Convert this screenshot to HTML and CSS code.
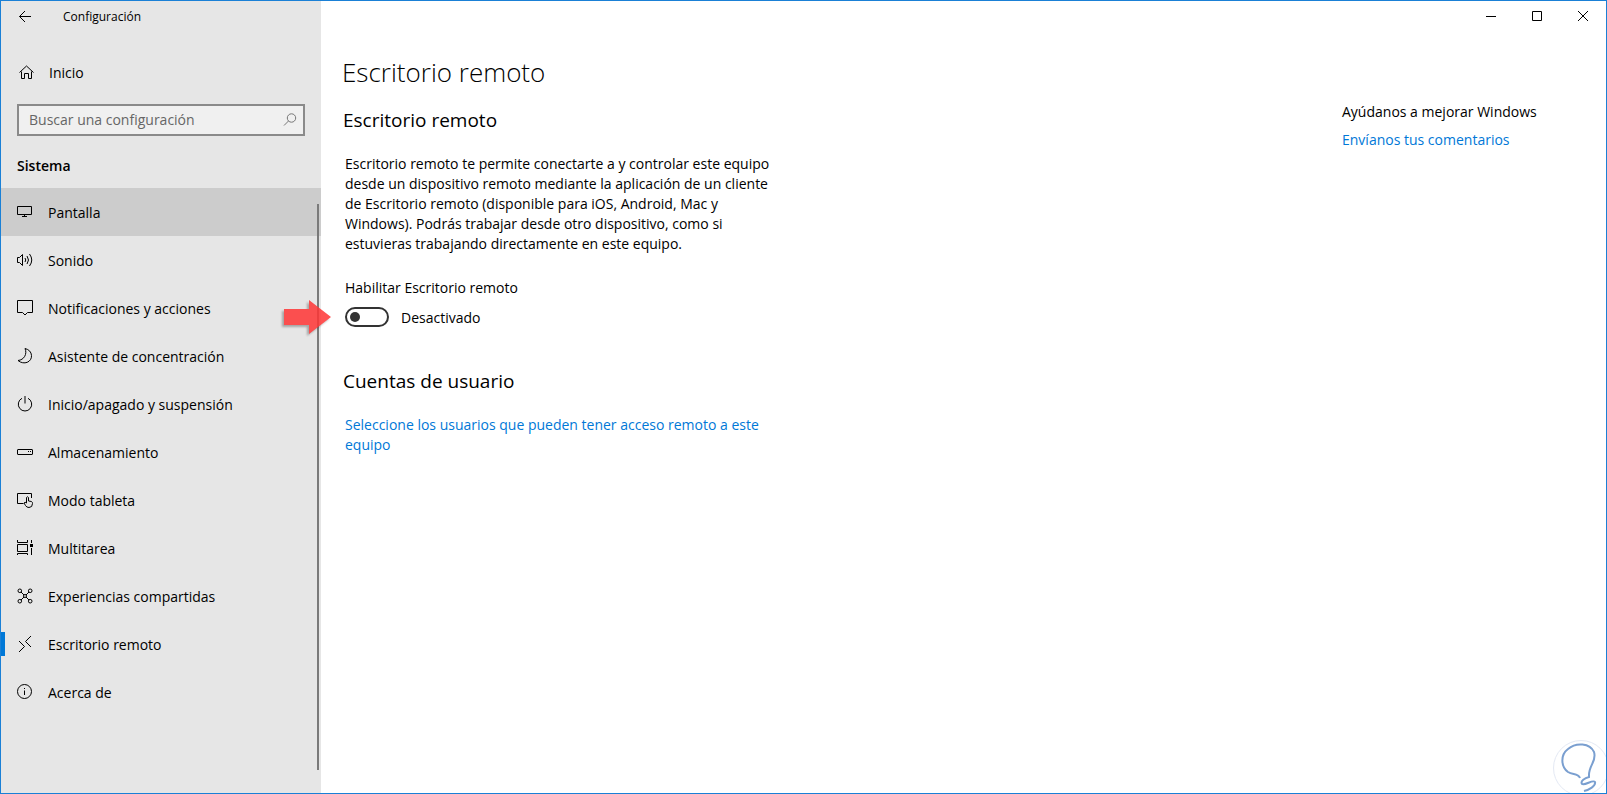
FILE: index.html
```
<!DOCTYPE html>
<html lang="es">
  <head>
    <meta charset="UTF-8" />
    <meta name="viewport" content="width=device-width, initial-scale=1" />
    <title>Configuración</title>
    <link rel="stylesheet" href="styles.css" />
  </head>

  <body>
    <div class="window">
      <div class="sidebar">
        <header class="titlebar">
          <button class="back" aria-label="Atrás">
            <svg class="icon" viewBox="0 0 16 16"><path d="M14 7.500H2.500M8 2L2.500 7.500L8 13" /></svg>
          </button>
          <span class="app-name">Configuración</span>
        </header>

        <a href="#" class="home">
          <svg class="icon" viewBox="0 0 16 16"><path d="M1.500 7.500L8.500 1L15.500 7.500M3.500 6.500V13.500H6.500V8.500H10.500V13.500H13.500V6.500" /></svg>
          <span>Inicio</span>
        </a>

        <form class="search">
          <input type="search" aria-label="Buscar una configuración" placeholder="Buscar una configuración" />
          <button type="button" aria-label="Buscar">
            <svg class="icon" viewBox="0 0 16 16"><circle cx="10.500" cy="6" r="4.200" /><path d="M7.500 9L3 13.500" /></svg>
          </button>
        </form>

        <h2 class="category">Sistema</h2>

        <nav>
          <a href="#" class="hover">
            <svg class="icon" viewBox="0 0 16 16"><path d="M.5 2.500H14.500V10.500H.5ZM7.500 10.500V12M5 12.500H10" /></svg>
            <span>Pantalla</span>
          </a>
          <a href="#">
            <svg class="icon" viewBox="0 0 16 16"><path d="M.5 5.500H2.500L5.500 2.500V13.500L2.500 10.500H.5ZM8 6Q9.500 8 8 10M10 4Q13 8 10 12M12.500 2Q17 8 12.500 14" /></svg>
            <span>Sonido</span>
          </a>
          <a href="#">
            <svg class="icon" viewBox="0 0 16 16"><path d="M.5 .5H15.500V12.500H10.500L8 15L5.500 12.500H.5Z" /></svg>
            <span>Notificaciones y acciones</span>
          </a>
          <a href="#">
            <svg class="icon" viewBox="0 0 16 16"><path d="M8 .5C10.500 6 7 12 1 12.500C7 17.500 15 14 14.500 7.500C14.300 4 12 1.500 8 .5Z" /></svg>
            <span>Asistente de concentración</span>
          </a>
          <a href="#">
            <svg class="icon" viewBox="0 0 16 16"><path d="M8 0V7.500M5 2.300A6.700 6.700 0 1 0 11 2.300" /></svg>
            <span>Inicio/apagado y suspensión</span>
          </a>
          <a href="#">
            <svg class="icon" viewBox="0 0 16 16"><rect x=".5" y="5.500" width="15" height="5" rx=".5" /><path d="M11 7.500H12M13 7.500H14" /></svg>
            <span>Almacenamiento</span>
          </a>
          <a href="#">
            <svg class="icon" viewBox="0 0 16 16"><path d="M6.500 11.500H.5V1.500H14.500V6M9.500 11V5.500Q10.500 4 11.500 5.500V9L14.500 9.500Q15.500 10 15.500 11.500Q15.500 15.500 12 15.500Q9.500 15.500 8.500 13.500L7 11Q8 9.500 9.500 11" /></svg>
            <span>Modo tableta</span>
          </a>
          <a href="#">
            <svg class="icon" viewBox="0 0 16 16"><path d="M.5 0V2.500H10.500V0M.5 4.500H10.500V11.500H.5ZM.5 15V13.500H10.500V15M14.500 0V3M14.500 8V15" /><path class="solid" d="M13 4H16V7H13Z" /></svg>
            <span>Multitarea</span>
          </a>
          <a href="#">
            <svg class="icon" viewBox="0 0 16 16"><circle cx="2.800" cy="2.800" r="1.800" /><circle cx="13.200" cy="2.800" r="1.800" /><circle cx="2.800" cy="13.200" r="1.800" /><circle cx="13.200" cy="13.200" r="1.800" /><circle cx="8" cy="8" r="1.500" /><path d="M4 4L7 7M12 4L9 7M4 12L7 9M12 12L9 9" /></svg>
            <span>Experiencias compartidas</span>
          </a>
          <a href="#" class="selected" aria-current="page">
            <svg class="icon" viewBox="0 0 16 16"><path d="M2 5L7.500 10.500L2 16M14 0L8.500 5.500L14 11" /></svg>
            <span>Escritorio remoto</span>
          </a>
          <a href="#">
            <svg class="icon" viewBox="0 0 16 16"><circle cx="7.500" cy="7.500" r="7" /><path d="M7.500 6.500V11M7.500 4V5" /></svg>
            <span>Acerca de</span>
          </a>
        </nav>
      </div>

      <div class="content">
        <div class="controls">
          <button aria-label="Minimizar">
            <svg viewBox="0 0 10 10"><path d="M0 5.500H10" /></svg>
          </button>
          <button aria-label="Maximizar">
            <svg viewBox="0 0 10 10"><path d="M.5 .5H9.500V9.500H.5Z" /></svg>
          </button>
          <button aria-label="Cerrar">
            <svg viewBox="0 0 10 10"><path d="M0 0L10 10M10 0L0 10" /></svg>
          </button>
        </div>

        <div class="columns">
          <main>
            <h1>Escritorio remoto</h1>

            <section>
              <h2>Escritorio remoto</h2>
              <p>
                Escritorio remoto te permite conectarte a y controlar este equipo
                desde un dispositivo remoto mediante la aplicación de un cliente
                de Escritorio remoto (disponible para iOS, Android, Mac y
                Windows). Podrás trabajar desde otro dispositivo, como si
                estuvieras trabajando directamente en este equipo.
              </p>
              <label for="remote">Habilitar Escritorio remoto</label>
              <div class="toggle">
                <input type="checkbox" role="switch" id="remote" />
                <span>Desactivado</span>
                <svg class="arrow" viewBox="0 0 48 36"><path d="M1 10H26V1L48 18L26 35V26H1Z" /></svg>
              </div>
            </section>

            <section>
              <h2>Cuentas de usuario</h2>
              <a href="#" class="link">Seleccione los usuarios que pueden tener acceso remoto a este equipo</a>
            </section>
          </main>

          <aside>
            <p>Ayúdanos a mejorar Windows</p>
            <a href="#" class="link">Envíanos tus comentarios</a>
          </aside>
        </div>
      </div>

      <svg class="bulb" viewBox="0 0 56 56">
        <circle cx="30" cy="29" r="27.500" />
        <path d="M29 39C27 34 22 36 17 33C10 28 9 16 17 10C25 3 39 4 43 13C46 22 38 26 38 36V38C34 39 29 42 31 45C34 47 42 40 44 43C45 47 38 51 33 52" />
      </svg>
    </div>
  </body>
</html>
```
FILE: styles.css
```
* {
  box-sizing: border-box;
}

body {
  margin: 0;
  font-family: "Open Sans", "Noto Sans", sans-serif;
  font-size: 14px;
  line-height: 20px;
  color: #000;
  background-color: #fff;
}

h1,
h2,
p {
  margin: 0;
  font-weight: 400;
}

a {
  color: inherit;
  text-decoration: none;
}

button {
  padding: 0;
  border: none;
  background: none;
}

svg {
  display: block;
  fill: none;
  stroke: #000;
}

.window {
  position: relative;
  display: flex;
  min-height: 100vh;
  border: 1px solid #1a80d6;
  overflow: hidden;
}

/* Sidebar */
.sidebar {
  flex: 0 0 320px;
  display: flex;
  flex-direction: column;
  background-color: #e6e6e6;
}

.icon {
  flex: none;
  width: 16px;
  height: 16px;
}

.titlebar {
  display: flex;
  align-items: center;
  height: 32px;
}

.back {
  display: grid;
  place-items: center;
  width: 48px;
  height: 30px;
}

.app-name {
  margin-left: 14px;
  font-size: 12px;
}

.home {
  display: flex;
  align-items: center;
  gap: 15px;
  height: 48px;
  margin-top: 16px;
  padding: 0 17px;
}

.search {
  display: flex;
  align-items: center;
  height: 32px;
  margin: 7px 16px 0;
  border: 2px solid #8a8a8a;
  background-color: #f0f0f0;
}

.search input {
  flex: 1;
  min-width: 0;
  padding: 0 10px;
  border: none;
  outline: none;
  background: none;
  font: inherit;
}

.search input::placeholder {
  color: #666;
}

.search button {
  padding: 0 6px;
}

.search svg {
  stroke: #777;
}

.category {
  margin: 20px 16px 12px;
  font-size: 14px;
  font-weight: 600;
}

nav {
  position: relative;
}

nav a {
  position: relative;
  display: flex;
  align-items: center;
  gap: 15px;
  height: 48px;
  padding: 0 16px;
}

nav span,
.toggle span {
  padding-top: 2px;
}

nav .hover {
  background-color: #ccc;
}

nav .selected::before {
  content: "";
  position: absolute;
  left: 0;
  width: 4px;
  height: 24px;
  background-color: #0078d7;
}

/* thin scroll thumb */
nav::after {
  content: "";
  position: absolute;
  top: 16px;
  right: 2px;
  width: 2px;
  height: 566px;
  background-color: #7a7a7a;
}

/* Content */
.content {
  flex: 1;
}

.controls {
  display: flex;
  justify-content: flex-end;
}

.controls button {
  display: grid;
  place-items: center;
  width: 46px;
  height: 30px;
}

.controls svg {
  width: 10px;
  height: 10px;
}

.columns {
  display: flex;
  justify-content: space-between;
  padding: 23px 0 0 24px;
}

main {
  max-width: 440px;
}

h1 {
  margin-left: -3px;
  font-size: 26px;
  font-weight: 300;
  line-height: 36px;
}

section {
  margin-bottom: 40px;
}

section h2 {
  margin: 17px 0 21px -2px;
  font-size: 19px;
  line-height: 26px;
}

label {
  display: block;
  margin: 24px 0 8px;
}

.toggle {
  position: relative;
  display: flex;
  align-items: center;
  gap: 12px;
}

.toggle input {
  appearance: none;
  display: flex;
  align-items: center;
  width: 44px;
  height: 20px;
  margin: 0;
  padding: 0 3px;
  border: 2px solid #333;
  border-radius: 10px;
}

.toggle input::before {
  content: "";
  width: 10px;
  height: 10px;
  border-radius: 50%;
  background-color: #333;
}

.toggle input:checked {
  justify-content: flex-end;
}

.arrow {
  position: absolute;
  top: -7px;
  left: -62px;
  width: 48px;
  height: 36px;
  fill: #ff3535;
  stroke: none;
  opacity: 0.85;
  filter: drop-shadow(-2px 2px 1px #0005);
}

.link {
  color: #0078d7;
}

aside {
  flex: 0 0 264px;
  display: flex;
  flex-direction: column;
  gap: 8px;
  margin-top: 48px;
}

.bulb {
  position: absolute;
  right: -1px;
  bottom: -2px;
  width: 56px;
  height: 56px;
  stroke: #7a9fd0;
  stroke-width: 2;
}

.bulb circle {
  stroke: #e4e9f4;
  stroke-width: 1;
}

.solid {
  fill: #000;
  stroke: none;
}
```
